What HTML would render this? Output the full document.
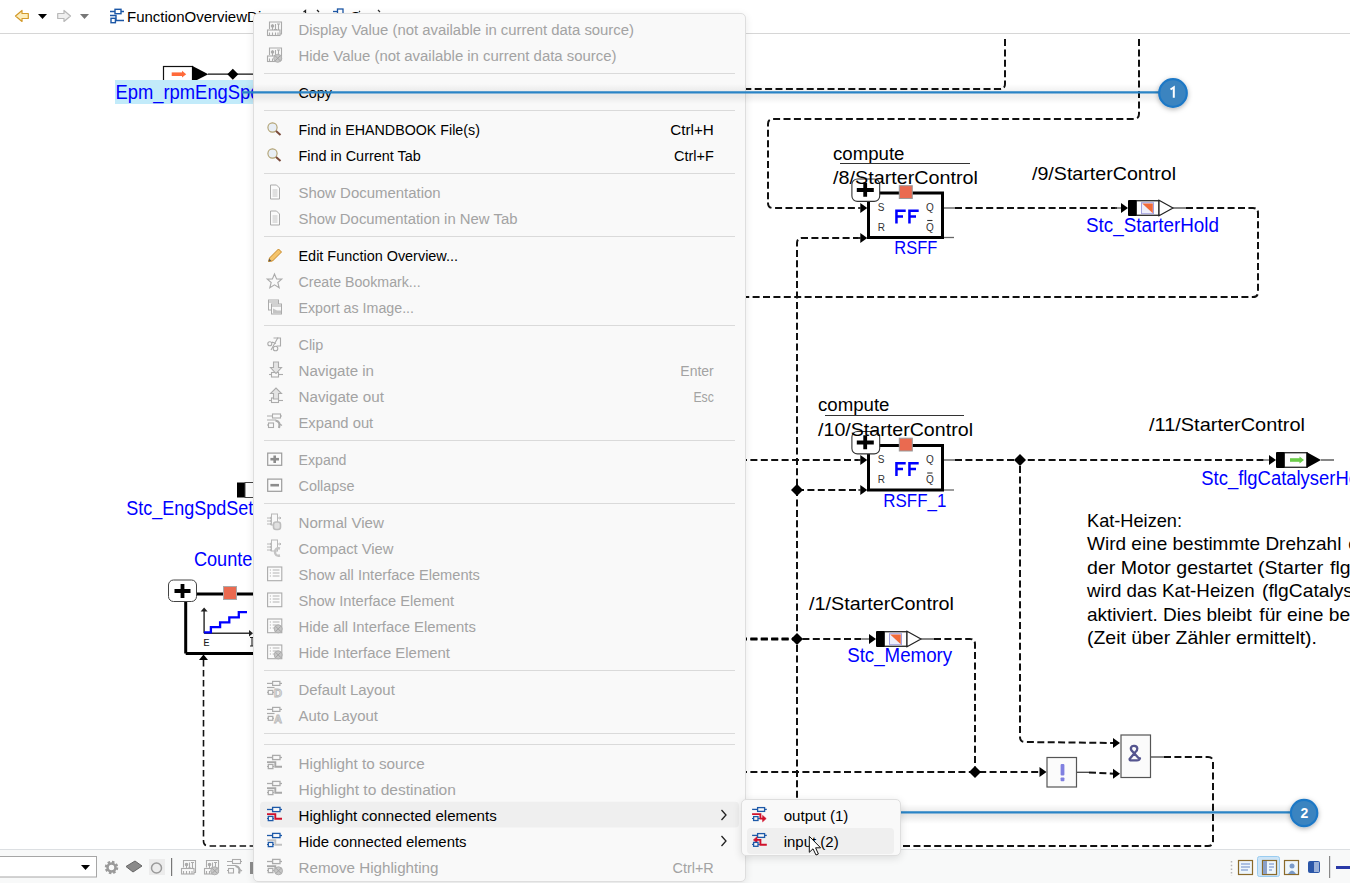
<!DOCTYPE html>
<html><head><meta charset="utf-8"><style>
html,body{margin:0;padding:0;width:1350px;height:883px;overflow:hidden;background:#fff;}
svg{position:absolute;left:0;top:0;font-family:"Liberation Sans", sans-serif;}
.menu{position:absolute;left:253px;top:13px;width:493px;height:869px;background:#f9f9f9;border:1px solid #dedede;box-sizing:border-box;border-radius:5px;box-shadow:0 2px 9px rgba(0,0,0,0.09);}
.sub{position:absolute;left:741px;top:799px;width:160px;height:57px;background:#f9f9f9;border:1px solid #dedede;box-sizing:border-box;border-radius:5px;box-shadow:0 2px 9px rgba(0,0,0,0.12);}
</style></head><body>
<svg width="1350" height="883" viewBox="0 0 1350 883">
<defs>
<linearGradient id="shadowgrad" x1="0" y1="0" x2="0" y2="1"><stop offset="0" stop-color="#000" stop-opacity="0"/><stop offset="0.5" stop-color="#000" stop-opacity="0.10"/><stop offset="1" stop-color="#000" stop-opacity="0"/></linearGradient>
<filter id="badgeShadow" x="-50%" y="-50%" width="200%" height="200%"><feDropShadow dx="0" dy="1.5" stdDeviation="2.5" flood-color="#000" flood-opacity="0.3"/></filter>
</defs>
<rect x="0" y="0" width="1350" height="33" fill="#fff"/>
<rect x="0" y="33" width="1350" height="1" fill="#d6d6d6"/>
<path d="M15.5,16 L22,10.5 L22,13.5 L28.3,13.5 L28.3,18.5 L22,18.5 L22,21.5 Z" fill="#fdeebd" stroke="#d39a2b" stroke-width="1.2" stroke-linejoin="round"/>
<path d="M38,14 L47,14 L42.5,19 Z" fill="#000"/>
<path d="M70.5,16 L64,10.5 L64,13.5 L57.7,13.5 L57.7,18.5 L64,18.5 L64,21.5 Z" fill="#f0f0f0" stroke="#b8b8b8" stroke-width="1.2" stroke-linejoin="round"/>
<path d="M80,14 L89,14 L84.5,19 Z" fill="#777"/>
<g stroke="#1c57a6" stroke-width="1.4" fill="none"><path d="M110,11.5 H124 M110,15.5 H116 V20.5 H124"/><rect x="115" y="9.3" width="6" height="4.4" fill="#fff"/><rect x="111" y="18.3" width="4.4" height="4.4" fill="#fff"/></g>
<text x="127" y="22" font-size="15" fill="#000" font-weight="normal" text-anchor="start">FunctionOverviewDiagram</text>
<path d="M303.5,12 L305.5,10.5 V13 M317,10 L319,12" stroke="#222" stroke-width="1.3" fill="none"/>
<g stroke="#1c57a6" stroke-width="1.3" fill="none"><path d="M333,11.5 H337"/><rect x="337.5" y="9" width="5.5" height="6" fill="#fff"/></g>
<text x="350.5" y="22" font-size="15" fill="#000">S</text><path d="M359,12 L360,11 M378,10 L380,12" stroke="#333" stroke-width="1.2"/>
<rect x="163.5" y="66.5" width="29" height="20" fill="#fff" stroke="#111" stroke-width="1.2"/>
<path d="M171.7,74.2 H182.5" stroke="#ff6a3a" stroke-width="3.6"/><path d="M182,70.8 L186.2,74.2 L182,77.6 Z" fill="#ff6a3a"/>
<path d="M192,65.8 L208.3,74.2 L192,82.6 Z" fill="#000"/>
<path d="M208,74.2 H254" stroke="#111" stroke-width="1.3"/>
<path d="M227.3,74.2 L232.8,68.7 L238.3,74.2 L232.8,79.7 Z" fill="#000"/>
<rect x="115" y="80" width="139" height="24" fill="#c2ebfa"/>
<text x="115.5" y="99" font-size="19.5" fill="#0000ff" font-weight="normal" text-anchor="start" textLength="145" lengthAdjust="spacingAndGlyphs">Epm_rpmEngSpd</text>
<path d="M1005,39 V84 Q1005,89 1000,89 H740" stroke="#111" stroke-width="2" fill="none" stroke-dasharray="7 3.4" stroke-dashoffset="0"/>
<path d="M1139,39 V114 Q1139,119 1134,119 H773 Q768,119 768,124 V203 Q768,208 773,208 H860" stroke="#111" stroke-width="2" fill="none" stroke-dasharray="7 3.4" stroke-dashoffset="0"/>
<path d="M858,208 H863" stroke="#444" stroke-width="1.2"/>
<path d="M860.3,203 L867.3,208 L860.3,213 Z" fill="#000"/>
<path d="M944,237.5 H954" stroke="#666" stroke-width="1.3"/>
<rect x="868.5" y="193.0" width="74" height="44.5" fill="#fff" stroke="#000" stroke-width="3"/>
<rect x="851.9" y="179.0" width="27.8" height="22.4" rx="5.5" fill="#fff" stroke="#333" stroke-width="1.1"/>
<path d="M856.8,190.0 H873.8 M865.2,182.7 V196.8" stroke="#000" stroke-width="3.8"/>
<rect x="899.3" y="185.7" width="13" height="12.8" fill="#ea6a50" stroke="#9a9a9a" stroke-width="1"/>
<text x="877.8" y="210.9" font-size="10" fill="#333">S</text>
<text x="877.8" y="230.8" font-size="10" fill="#333">R</text>
<text x="926" y="210.9" font-size="10" fill="#333">Q</text>
<text x="926" y="230.8" font-size="10" fill="#333">Q</text>
<path d="M927.2,220.5 H932.5" stroke="#333" stroke-width="1.1"/>
<path d="M896.45,223.5 V210.75 H905.7 M896.45,216.55 H903.0" stroke="#0000ff" stroke-width="2.5" fill="none"/>
<path d="M909.45,223.5 V210.75 H918.7 M909.45,216.55 H916.0" stroke="#0000ff" stroke-width="2.5" fill="none"/>
<text x="894.3" y="254.3" font-size="19" fill="#0000ff" font-weight="normal" text-anchor="start" textLength="43" lengthAdjust="spacingAndGlyphs">RSFF</text>
<text x="833" y="159.5" font-size="18" fill="#000" font-weight="normal" text-anchor="start" textLength="71.5" lengthAdjust="spacingAndGlyphs">compute</text>
<path d="M840,163.5 H970" stroke="#333" stroke-width="1"/>
<text x="833" y="184.0" font-size="19" fill="#000" font-weight="normal" text-anchor="start" textLength="145" lengthAdjust="spacingAndGlyphs">/8/StarterControl</text>
<path d="M944,208 H955" stroke="#555" stroke-width="1.3"/>
<path d="M955,208 H1117" stroke="#111" stroke-width="2" fill="none" stroke-dasharray="7 3.4" stroke-dashoffset="0"/>
<path d="M1115,208 H1122" stroke="#555" stroke-width="1.2"/>
<path d="M1121,203 L1128,208 L1121,213 Z" fill="#000"/>
<text x="1032" y="179.5" font-size="19" fill="#000" font-weight="normal" text-anchor="start" textLength="144" lengthAdjust="spacingAndGlyphs">/9/StarterControl</text>
<rect x="1136" y="200.7" width="23" height="14.6" fill="#fdfdfd" stroke="#333" stroke-width="1.4"/>
<rect x="1128" y="200" width="8.6" height="16" rx="1" fill="#000"/>
<rect x="1141.5" y="202.7" width="12" height="11" fill="#eeeefa" stroke="#a0a0e0" stroke-width="1"/>
<path d="M1142.2,203.4 H1152.8 V213.3 Z" fill="#f26b3a"/>
<path d="M1159,200.2 L1173,208 L1159,215.8 Z" fill="#fff" stroke="#222" stroke-width="1.2"/>
<path d="M1173,208 H1186" stroke="#444" stroke-width="1.3"/>
<path d="M1186,208 H1253 Q1258,208 1258,213 V292 Q1258,297 1253,297 H740" stroke="#111" stroke-width="2" fill="none" stroke-dasharray="7 3.4" stroke-dashoffset="0"/>
<text x="1086" y="232" font-size="19.5" fill="#0000ff" font-weight="normal" text-anchor="start" textLength="133" lengthAdjust="spacingAndGlyphs">Stc_StarterHold</text>
<path d="M860,238 H802 Q797,238 797,243 V860" stroke="#111" stroke-width="2" fill="none" stroke-dasharray="7 3.4" stroke-dashoffset="0"/>
<path d="M858,238 H863" stroke="#444" stroke-width="1.2"/>
<path d="M860.3,233 L867.3,238 L860.3,243 Z" fill="#000"/>
<path d="M740,460 H860" stroke="#111" stroke-width="2" fill="none" stroke-dasharray="7 3.4" stroke-dashoffset="0"/>
<path d="M858,460 H863" stroke="#444" stroke-width="1.2"/>
<path d="M860.3,455 L867.3,460 L860.3,465 Z" fill="#000"/>
<path d="M944,490 H954" stroke="#666" stroke-width="1.3"/>
<rect x="868.5" y="445.5" width="74" height="44.5" fill="#fff" stroke="#000" stroke-width="3"/>
<rect x="851.9" y="431.5" width="27.8" height="22.4" rx="5.5" fill="#fff" stroke="#333" stroke-width="1.1"/>
<path d="M856.8,442.5 H873.8 M865.2,435.2 V449.3" stroke="#000" stroke-width="3.8"/>
<rect x="899.3" y="438.2" width="13" height="12.8" fill="#ea6a50" stroke="#9a9a9a" stroke-width="1"/>
<text x="877.8" y="463.4" font-size="10" fill="#333">S</text>
<text x="877.8" y="483.3" font-size="10" fill="#333">R</text>
<text x="926" y="463.4" font-size="10" fill="#333">Q</text>
<text x="926" y="483.3" font-size="10" fill="#333">Q</text>
<path d="M927.2,473 H932.5" stroke="#333" stroke-width="1.1"/>
<path d="M896.45,476 V463.25 H905.7 M896.45,469.05 H903.0" stroke="#0000ff" stroke-width="2.5" fill="none"/>
<path d="M909.45,476 V463.25 H918.7 M909.45,469.05 H916.0" stroke="#0000ff" stroke-width="2.5" fill="none"/>
<text x="883.3" y="506.8" font-size="19" fill="#0000ff" font-weight="normal" text-anchor="start" textLength="63" lengthAdjust="spacingAndGlyphs">RSFF_1</text>
<text x="818" y="411" font-size="18" fill="#000" font-weight="normal" text-anchor="start" textLength="71.5" lengthAdjust="spacingAndGlyphs">compute</text>
<path d="M825,415.5 H964" stroke="#333" stroke-width="1"/>
<text x="818" y="435.5" font-size="19" fill="#000" font-weight="normal" text-anchor="start" textLength="155" lengthAdjust="spacingAndGlyphs">/10/StarterControl</text>
<path d="M797,490 H860" stroke="#111" stroke-width="2" fill="none" stroke-dasharray="7 3.4" stroke-dashoffset="0"/>
<path d="M858,490 H863" stroke="#444" stroke-width="1.2"/>
<path d="M860.3,485 L867.3,490 L860.3,495 Z" fill="#000"/>
<path d="M791,490 L797,484 L803,490 L797,496 Z" fill="#000"/>
<path d="M944,460 H955" stroke="#555" stroke-width="1.3"/>
<path d="M955,460 H1265" stroke="#111" stroke-width="2" fill="none" stroke-dasharray="7 3.4" stroke-dashoffset="0"/>
<path d="M1264,460 H1271" stroke="#555" stroke-width="1.2"/>
<path d="M1269,455 L1276,460 L1269,465 Z" fill="#000"/>
<path d="M1014,460 L1020,454 L1026,460 L1020,466 Z" fill="#000"/>
<text x="1149" y="431" font-size="19" fill="#000" font-weight="normal" text-anchor="start" textLength="156" lengthAdjust="spacingAndGlyphs">/11/StarterControl</text>
<rect x="1284" y="452.7" width="23" height="14.6" fill="#fdfdfd" stroke="#333" stroke-width="1.4"/>
<rect x="1276" y="452" width="8.6" height="16" rx="1" fill="#000"/>
<path d="M1290,460 H1300" stroke="#6acc48" stroke-width="3.6"/><path d="M1299.5,456.6 L1304,460 L1299.5,463.4 Z" fill="#6acc48"/>
<path d="M1306.5,452 L1321,460 L1306.5,468 Z" fill="#000"/>
<path d="M1321,460 H1334" stroke="#444" stroke-width="1.3"/>
<text x="1201.3" y="484.8" font-size="19.5" fill="#0000ff" font-weight="normal" text-anchor="start" textLength="172" lengthAdjust="spacingAndGlyphs">Stc_flgCatalyserHold</text>
<text x="1087" y="526.8" font-size="18.5" fill="#000" font-weight="normal" text-anchor="start" textLength="95" lengthAdjust="spacingAndGlyphs">Kat-Heizen:</text>
<text x="1087" y="549.8" font-size="18.5" fill="#000" font-weight="normal" text-anchor="start" textLength="254.4" lengthAdjust="spacingAndGlyphs">Wird eine bestimmte Drehzahl</text>
<text x="1348.2" y="549.8" font-size="18.5" fill="#000" font-weight="normal" text-anchor="start" textLength="64" lengthAdjust="spacingAndGlyphs">erreicht</text>
<text x="1087" y="573.6" font-size="18.5" fill="#000" font-weight="normal" text-anchor="start" textLength="236.3" lengthAdjust="spacingAndGlyphs">der Motor gestartet (Starter</text>
<text x="1330" y="573.6" font-size="18.5" fill="#000" font-weight="normal" text-anchor="start" textLength="85" lengthAdjust="spacingAndGlyphs">flgStarter)</text>
<text x="1087" y="597.3" font-size="18.5" fill="#000" font-weight="normal" text-anchor="start" textLength="167.7" lengthAdjust="spacingAndGlyphs">wird das Kat-Heizen</text>
<text x="1262.1" y="597.3" font-size="18.5" fill="#000" font-weight="normal" text-anchor="start" textLength="155" lengthAdjust="spacingAndGlyphs">(flgCatalyserHeat)</text>
<text x="1087" y="621.2" font-size="18.5" fill="#000" font-weight="normal" text-anchor="start" textLength="164.9" lengthAdjust="spacingAndGlyphs">aktiviert. Dies bleibt</text>
<text x="1259.3" y="621.2" font-size="18.5" fill="#000" font-weight="normal" text-anchor="start" textLength="158" lengthAdjust="spacingAndGlyphs">für eine bestimmte</text>
<text x="1087" y="644" font-size="18.5" fill="#000" font-weight="normal" text-anchor="start" textLength="230" lengthAdjust="spacingAndGlyphs">(Zeit über Zähler ermittelt).</text>
<path d="M1020,466 V737 Q1020,742 1025,742 L1114,743" stroke="#111" stroke-width="2" fill="none" stroke-dasharray="7 3.4" stroke-dashoffset="0"/>
<path d="M1113,738 L1120,743 L1113,748 Z" fill="#000"/>
<path d="M740,639 H864" stroke="#111" stroke-width="2" fill="none" stroke-dasharray="7 3.4" stroke-dashoffset="0"/>
<path d="M740,639 H797" stroke="#000" stroke-width="3" fill="none" stroke-dasharray="7 3.4"/>
<path d="M862,639 H870" stroke="#444" stroke-width="1.2"/>
<path d="M869,634 L876,639 L869,644 Z" fill="#000"/>
<path d="M791,639 L797,633 L803,639 L797,645 Z" fill="#000"/>
<text x="809" y="610" font-size="19" fill="#000" font-weight="normal" text-anchor="start" textLength="145" lengthAdjust="spacingAndGlyphs">/1/StarterControl</text>
<rect x="884" y="631.7" width="23" height="14.6" fill="#fdfdfd" stroke="#333" stroke-width="1.4"/>
<rect x="876" y="631" width="8.6" height="16" rx="1" fill="#000"/>
<rect x="889.5" y="633.7" width="12" height="11" fill="#eeeefa" stroke="#a0a0e0" stroke-width="1"/>
<path d="M890.2,634.4 H900.8 V644.3 Z" fill="#f26b3a"/>
<path d="M907,631.2 L921,639 L907,646.8 Z" fill="#fff" stroke="#222" stroke-width="1.2"/>
<path d="M921,639 H934" stroke="#444" stroke-width="1.3"/>
<path d="M934,639 H970 Q975,639 975,644 V772" stroke="#111" stroke-width="2" fill="none" stroke-dasharray="7 3.4" stroke-dashoffset="0"/>
<text x="847.2" y="661.8" font-size="19.5" fill="#0000ff" font-weight="normal" text-anchor="start" textLength="105" lengthAdjust="spacingAndGlyphs">Stc_Memory</text>
<path d="M740,772 H1040" stroke="#111" stroke-width="2" fill="none" stroke-dasharray="7 3.4" stroke-dashoffset="0"/>
<path d="M1039.5,767 L1046.5,772 L1039.5,777 Z" fill="#000"/>
<path d="M969,772 L975,766 L981,772 L975,778 Z" fill="#000"/>
<rect x="1047" y="757.5" width="29.5" height="29.5" fill="#fbfbfb" stroke="#555" stroke-width="1.2"/>
<rect x="1060.6" y="764" width="3.8" height="11.6" rx="1" fill="#8080e0"/><rect x="1060.6" y="777.5" width="3.8" height="3.8" rx="0.8" fill="#8080e0"/>
<path d="M1077,772.3 H1089" stroke="#444" stroke-width="1.3"/>
<path d="M1089,772.4 L1114,773.8" stroke="#111" stroke-width="2" fill="none" stroke-dasharray="7 3.4" stroke-dashoffset="0"/>
<path d="M1113,768.8 L1120,773.8 L1113,778.8 Z" fill="#000"/>
<rect x="1121" y="735" width="29.5" height="42.5" fill="#fbfbfb" stroke="#555" stroke-width="1.2"/>
<g fill="none" stroke="#55558f" stroke-width="2.3" stroke-linejoin="round" stroke-linecap="round"><path d="M1133,752 Q1130.3,750 1131,747.6 Q1132,745.6 1134.3,745.9 Q1137,746.2 1137.3,748.3 Q1137.5,750.4 1135.3,752.2 L1129.6,759 Q1129.4,760.4 1131.2,760.4 H1137 Q1139.4,760.4 1140,758.3 M1133,752 L1138.5,758"/></g>
<path d="M1151,757 H1164" stroke="#444" stroke-width="1.3"/>
<path d="M1164,757 H1208 Q1213,757 1213,762 V841 Q1213,846 1208,846 H890" stroke="#111" stroke-width="2" fill="none" stroke-dasharray="7 3.4" stroke-dashoffset="0"/>
<rect x="237" y="482.5" width="8" height="15" fill="#000"/>
<rect x="245" y="482.5" width="12" height="15" fill="#fff" stroke="#444" stroke-width="1"/>
<text x="126.3" y="514.7" font-size="19.5" fill="#0000ff" font-weight="normal" text-anchor="start" textLength="166" lengthAdjust="spacingAndGlyphs">Stc_EngSpdSetpoint</text>
<text x="193.9" y="566.3" font-size="19.5" fill="#0000ff" font-weight="normal" text-anchor="start" textLength="64.5" lengthAdjust="spacingAndGlyphs">Counter</text>
<path d="M185.7,653.4 V594 H260 M185.7,653.4 H260" stroke="#000" stroke-width="3" fill="none"/>
<rect x="168.5" y="580" width="28" height="21.5" rx="5" fill="#fff" stroke="#444" stroke-width="1"/>
<path d="M174.5,591 H190.5 M182.5,584 V598" stroke="#000" stroke-width="3.8"/>
<rect x="223.5" y="586.5" width="13" height="13" fill="#ea6a50" stroke="#aaa" stroke-width="1"/>
<path d="M204.1,633.3 V610 M204.1,633.3 H251" stroke="#333" stroke-width="1.5" fill="none"/><path d="M200.6,611.5 L204.1,607.5 L207.6,611.5 Z" fill="#222"/><path d="M249,630 L253,633.3 L249,636.6 Z" fill="#222"/>
<path d="M204,632.3 H210.9 V627.2 H220.1 V622.4 H229.3 V617.3 H238.8 V612.2 H247" stroke="#0000ff" stroke-width="2.3" fill="none"/>
<text x="203.3" y="646.2" font-size="11.5" fill="#222" font-family="Liberation Mono" textLength="6.5" lengthAdjust="spacingAndGlyphs">E</text><path d="M250,637.5 H254 M252,637.5 V646 M250,646 H254" stroke="#222" stroke-width="1.1"/>
<path d="M203.5,660 V841 Q203.5,846 208.5,846 H260" stroke="#111" stroke-width="1.6" fill="none" stroke-dasharray="6.5 3.5"/>
<path d="M199.0,660.0 L203.5,654.5 L208.0,660.0 Z" fill="#000"/>
<rect x="880" y="804" width="420" height="20" fill="url(#shadowgrad)"/>
<path d="M880,812.4 H1292" stroke="#2a84c6" stroke-width="2.3"/>
<g filter="url(#badgeShadow)"><circle cx="1304.1" cy="813" r="13.2" fill="#3b84c0" stroke="#1d78c6" stroke-width="2.2"/></g>
<text x="1304.3" y="817.5" font-size="14" font-weight="bold" fill="#fff" text-anchor="middle">2</text>
<rect x="0" y="849" width="1350" height="34" fill="#f8f9f9"/>
<rect x="0" y="849" width="1350" height="1" fill="#dcdfe2"/>
<rect x="-2" y="856.5" width="98.5" height="20.5" fill="#fff" stroke="#a6a6a6" stroke-width="1"/>
<path d="M81,865 L90,865 L85.5,870 Z" fill="#000"/>
<circle cx="111.5" cy="867.5" r="5" fill="none" stroke="#9a9a9a" stroke-width="3.5" stroke-dasharray="2.2 1.7"/><circle cx="111.5" cy="867.5" r="4" fill="none" stroke="#9a9a9a" stroke-width="2.5"/>
<path d="M126,866.5 L135,861 L142,866 L133,872 Z" fill="#8a8a8a" stroke="#666" stroke-width="1"/>
<rect x="149" y="859" width="16" height="16" fill="#ececec"/><circle cx="156.5" cy="868" r="5" fill="none" stroke="#9a9a9a" stroke-width="1.5"/>
<rect x="171" y="858" width="1.2" height="18" fill="#777"/>
<rect x="250" y="862" width="4" height="12" fill="#8d8d8d"/>
<path d="M1231.5,861 V876" stroke="#b8b8b8" stroke-width="1.5" stroke-dasharray="1.5 2.2"/>
<rect x="1238.5" y="860.5" width="14" height="14" fill="#eef6fb" stroke="#8a6a2a" stroke-width="1.2"/><path d="M1241,864 H1250 M1241,867 H1250 M1241,870 H1248" stroke="#6a8ac8" stroke-width="1"/>
<rect x="1257.5" y="856.5" width="22" height="20" rx="2" fill="#cce4f7" stroke="#99ccf0" stroke-width="1"/>
<rect x="1262.5" y="860.5" width="14" height="14" fill="#eef6fb" stroke="#8a6a2a" stroke-width="1.2"/><rect x="1263" y="861" width="4" height="13" fill="#8aa0c8"/><path d="M1269,864 H1274 M1269,867 H1274 M1269,870 H1272" stroke="#6a8ac8" stroke-width="1"/>
<rect x="1284.5" y="860.5" width="14" height="14" fill="#eef6fb" stroke="#8a6a2a" stroke-width="1.2"/><circle cx="1292" cy="866" r="2.5" fill="#7a9ac8"/><path d="M1288,874 Q1292,867 1296,874" fill="#7a9ac8"/>
<rect x="1308" y="861" width="12" height="12" rx="2" fill="#2a56a8"/><rect x="1314" y="862" width="5" height="10" fill="#9ab0d8"/>
<rect x="1329" y="856" width="1.2" height="22" fill="#888"/>
<rect x="1336" y="866" width="14" height="3" fill="#2a3aa8"/>
<g transform="translate(181,860.0)" stroke="#ababab" stroke-width="1.1" fill="none"><path d="M2.5,7.5 V0.5 H14.5 V12.5 H13"/><path d="M5.5,3 V8.5 M8.5,2.5 V8.5 M11.5,3 V8.5 M10,2.5 H13 M7,8 H10"/><circle cx="5.5" cy="4.5" r="1.2" fill="#ababab"/><rect x="0.5" y="8.5" width="12.5" height="5.5" fill="#f9f9f9"/><path d="M2.5,11 V14 M5.5,11 V14 M8.5,11 V14 M11,11 V14"/></g><g transform="translate(204,860.0)" stroke="#ababab" stroke-width="1.1" fill="none"><path d="M2.5,7.5 V0.5 H14.5 V12.5 H13"/><path d="M5.5,3 V8.5 M8.5,2.5 V8.5 M11.5,3 V8.5 M10,2.5 H13 M7,8 H10"/><circle cx="5.5" cy="4.5" r="1.2" fill="#ababab"/><rect x="0.5" y="8.5" width="8" height="5.5" fill="#f9f9f9"/><path d="M2.5,11 V14 M5.5,11 V14"/><circle cx="10.7" cy="10.8" r="4" fill="#c6c6c6" stroke="#b0b0b0" stroke-width="1"/><path d="M8.1,8.200000000000001 L13.299999999999999,13.4 M13.299999999999999,8.200000000000001 L8.1,13.4" stroke="#a0a0a0" stroke-width="0.9"/></g><g transform="translate(227,860.0)" stroke="#ababab" stroke-width="1.1" fill="none"><path d="M0,1.5 H15 M0,5.5 H9 M0,10.5 H7"/><rect x="5.5" y="-0.5" width="8" height="4" fill="#f9f9f9"/><rect x="1.5" y="8.5" width="5" height="4.5" fill="#f9f9f9"/><path d="M8.5,6 Q14,7 12,13.5" stroke-width="2.2"/><path d="M12,9 L15,11" /></g>
</svg>
<div class="menu"></div>
<svg width="1350" height="883" viewBox="0 0 1350 883">

<g transform="translate(267,21.5)" stroke="#ababab" stroke-width="1.1" fill="none"><path d="M2.5,7.5 V0.5 H14.5 V12.5 H13"/><path d="M5.5,3 V8.5 M8.5,2.5 V8.5 M11.5,3 V8.5 M10,2.5 H13 M7,8 H10"/><circle cx="5.5" cy="4.5" r="1.2" fill="#ababab"/><rect x="0.5" y="8.5" width="12.5" height="5.5" fill="#f9f9f9"/><path d="M2.5,11 V14 M5.5,11 V14 M8.5,11 V14 M11,11 V14"/></g>
<text x="298.5" y="35" font-size="15.5" fill="#a3a3a3" textLength="335.5" lengthAdjust="spacingAndGlyphs">Display Value (not available in current data source)</text>
<g transform="translate(267,47.5)" stroke="#ababab" stroke-width="1.1" fill="none"><path d="M2.5,7.5 V0.5 H14.5 V12.5 H13"/><path d="M5.5,3 V8.5 M8.5,2.5 V8.5 M11.5,3 V8.5 M10,2.5 H13 M7,8 H10"/><circle cx="5.5" cy="4.5" r="1.2" fill="#ababab"/><rect x="0.5" y="8.5" width="8" height="5.5" fill="#f9f9f9"/><path d="M2.5,11 V14 M5.5,11 V14"/><circle cx="10.7" cy="10.8" r="4" fill="#c6c6c6" stroke="#b0b0b0" stroke-width="1"/><path d="M8.1,8.200000000000001 L13.299999999999999,13.4 M13.299999999999999,8.200000000000001 L8.1,13.4" stroke="#a0a0a0" stroke-width="0.9"/></g>
<text x="298.5" y="61" font-size="15.5" fill="#a3a3a3" textLength="318" lengthAdjust="spacingAndGlyphs">Hide Value (not available in current data source)</text>
<rect x="264" y="73" width="471" height="1" fill="#dadada"/>
<text x="298.5" y="98" font-size="15.5" fill="#000" textLength="33.4" lengthAdjust="spacingAndGlyphs">Copy</text>
<rect x="264" y="110" width="471" height="1" fill="#dadada"/>
<g transform="translate(267,121.5)"><circle cx="5.5" cy="6" r="4.6" fill="#e8eef5" stroke="#b0a070" stroke-width="1.1"/><path d="M9,9.5 L13.5,13.5" stroke="#7a4a3a" stroke-width="2"/></g>
<text x="298.5" y="135" font-size="15.5" fill="#000" textLength="181.4" lengthAdjust="spacingAndGlyphs">Find in EHANDBOOK File(s)</text>
<text x="670.3" y="135" font-size="15.5" fill="#000" textLength="43.5" lengthAdjust="spacingAndGlyphs">Ctrl+H</text>
<g transform="translate(267,147.5)"><circle cx="5.5" cy="6" r="4.6" fill="#e8eef5" stroke="#b0a070" stroke-width="1.1"/><path d="M9,9.5 L13.5,13.5" stroke="#7a4a3a" stroke-width="2"/></g>
<text x="298.5" y="161" font-size="15.5" fill="#000" textLength="122.2" lengthAdjust="spacingAndGlyphs">Find in Current Tab</text>
<text x="674.0999999999999" y="161" font-size="15.5" fill="#000" textLength="39.7" lengthAdjust="spacingAndGlyphs">Ctrl+F</text>
<rect x="264" y="173" width="471" height="1" fill="#dadada"/>
<g transform="translate(267,184.5)" stroke="#ababab" stroke-width="1" fill="#fbfbfb"><path d="M3.5,0.5 H9.5 L12.5,3.5 V14.5 H3.5 Z"/><path d="M5.5,5.5 H10.5 M5.5,7.5 H10.5 M5.5,9.5 H10.5 M5.5,11.5 H10.5" stroke="#c4c4c4"/></g>
<text x="298.5" y="198" font-size="15.5" fill="#a3a3a3" textLength="142.2" lengthAdjust="spacingAndGlyphs">Show Documentation</text>
<g transform="translate(267,210.5)" stroke="#ababab" stroke-width="1" fill="#fbfbfb"><path d="M3.5,0.5 H9.5 L12.5,3.5 V14.5 H3.5 Z"/><path d="M5.5,5.5 H10.5 M5.5,7.5 H10.5 M5.5,9.5 H10.5 M5.5,11.5 H10.5" stroke="#c4c4c4"/></g>
<text x="298.5" y="224" font-size="15.5" fill="#a3a3a3" textLength="219" lengthAdjust="spacingAndGlyphs">Show Documentation in New Tab</text>
<rect x="264" y="236" width="471" height="1" fill="#dadada"/>
<g transform="translate(267,247.5)"><path d="M1.5,14 L2.5,10.5 L11.5,1.5 L14.5,4.5 L5.5,13.5 Z" fill="#f5c46a" stroke="#c88a2a" stroke-width="1"/><path d="M1.5,14 L2.3,11.3 L4.3,13.3 Z" fill="#555"/></g>
<text x="298.5" y="261" font-size="15.5" fill="#000" textLength="159.5" lengthAdjust="spacingAndGlyphs">Edit Function Overview...</text>
<g transform="translate(267,273.5)"><path d="M7.5,0.5 L9.6,5.4 L14.8,5.6 L10.8,9 L12.2,14.3 L7.5,11.4 L2.8,14.3 L4.2,9 L0.2,5.6 L5.4,5.4 Z" fill="none" stroke="#ababab" stroke-width="1.1"/></g>
<text x="298.5" y="287" font-size="15.5" fill="#a3a3a3" textLength="122.2" lengthAdjust="spacingAndGlyphs">Create Bookmark...</text>
<g transform="translate(267,299.5)" stroke="#ababab" stroke-width="1" fill="#f9f9f9"><rect x="1.5" y="0.5" width="10" height="10"/><path d="M1.5,2.5 H11.5"/><rect x="4.5" y="4.5" width="10" height="10"/><path d="M4.5,6.5 H14.5" /><path d="M6,9 L10,11 L14,11 V14 H6Z" fill="#c4c4c4" stroke="none"/></g>
<text x="298.5" y="313" font-size="15.5" fill="#a3a3a3" textLength="115.5" lengthAdjust="spacingAndGlyphs">Export as Image...</text>
<rect x="264" y="325" width="471" height="1" fill="#dadada"/>
<g transform="translate(267,336.5)" stroke="#ababab" stroke-width="1.1" fill="none"><path d="M6.5,1.5 H13.5 V9.5 H9.5"/><path d="M4,13.5 L11,1 M9,7 L5,5.5 M1,6 H6"/><circle cx="2.8" cy="7.3" r="2" fill="#f9f9f9"/><circle cx="8.5" cy="12" r="2.3" fill="#f9f9f9"/></g>
<text x="298.5" y="350" font-size="15.5" fill="#a3a3a3" textLength="24.8" lengthAdjust="spacingAndGlyphs">Clip</text>
<g transform="translate(267,362.5)" stroke="#ababab" stroke-width="1.1"><path d="M2,12 H16" /><rect x="4.5" y="10" width="7" height="4.5" fill="#f9f9f9"/><path d="M6.5,-0.5 H11.5 V5 H14.5 L9,11 L3.5,5 H6.5 Z" fill="#e4e4e4"/></g>
<text x="298.5" y="376" font-size="15.5" fill="#a3a3a3" textLength="75.5" lengthAdjust="spacingAndGlyphs">Navigate in</text>
<text x="680.3" y="376" font-size="15.5" fill="#a3a3a3" textLength="33.5" lengthAdjust="spacingAndGlyphs">Enter</text>
<g transform="translate(267,388.5)" stroke="#ababab" stroke-width="1.1"><path d="M2,12 H16" /><rect x="4.5" y="9.5" width="7" height="4.5" fill="#f9f9f9"/><path d="M6.5,10.5 H11.5 V5 H14.5 L9,-0.5 L3.5,5 H6.5 Z" fill="#e4e4e4"/></g>
<text x="298.5" y="402" font-size="15.5" fill="#a3a3a3" textLength="85.4" lengthAdjust="spacingAndGlyphs">Navigate out</text>
<text x="693.4" y="402" font-size="15.5" fill="#a3a3a3" textLength="20.4" lengthAdjust="spacingAndGlyphs">Esc</text>
<g transform="translate(267,414.5)" stroke="#ababab" stroke-width="1.1" fill="none"><path d="M0,1.5 H15 M0,5.5 H9 M0,10.5 H7"/><rect x="5.5" y="-0.5" width="8" height="4" fill="#f9f9f9"/><rect x="1.5" y="8.5" width="5" height="4.5" fill="#f9f9f9"/><path d="M8.5,6 Q14,7 12,13.5" stroke-width="2.2"/><path d="M12,9 L15,11" /></g>
<text x="298.5" y="428" font-size="15.5" fill="#a3a3a3" textLength="74.7" lengthAdjust="spacingAndGlyphs">Expand out</text>
<rect x="264" y="440" width="471" height="1" fill="#dadada"/>
<g transform="translate(267,451.5)"><rect x="0.7" y="1.6" width="14" height="12.2" fill="#fbfbfb" stroke="#9c9c9c" stroke-width="1.2"/><path d="M3.4,7.7 H12" stroke="#8c8c8c" stroke-width="2.6"/><path d="M7.7,4 V11.5" stroke="#8c8c8c" stroke-width="2.6"/></g>
<text x="298.5" y="465" font-size="15.5" fill="#a3a3a3" textLength="48" lengthAdjust="spacingAndGlyphs">Expand</text>
<g transform="translate(267,477.5)"><rect x="0.7" y="1.6" width="14" height="12.2" fill="#fbfbfb" stroke="#9c9c9c" stroke-width="1.2"/><path d="M3.4,7.7 H12" stroke="#8c8c8c" stroke-width="2.6"/></g>
<text x="298.5" y="491" font-size="15.5" fill="#a3a3a3" textLength="56" lengthAdjust="spacingAndGlyphs">Collapse</text>
<rect x="264" y="503" width="471" height="1" fill="#dadada"/>
<g transform="translate(267,514.5)" stroke="#b8b8b8" stroke-width="1" fill="none"><path d="M0,3.5 H4 M0,6.5 H4 M0,9.5 H4 M3,2.5 L4.5,3.5 L3,4.5 M3,5.5 L4.5,6.5 L3,7.5 M3,8.5 L4.5,9.5 L3,10.5 M10,3.5 H14 M12.5,2.5 L14,3.5 L12.5,4.5"/><rect x="4.5" y="-0.5" width="6" height="11" fill="#f9f9f9"/><rect x="6.5" y="7.5" width="7" height="7.5" rx="2.5" fill="#e0e0e0" stroke="#bdbdbd" stroke-width="1.6"/></g>
<text x="298.5" y="528" font-size="15.5" fill="#a3a3a3" textLength="85.4" lengthAdjust="spacingAndGlyphs">Normal View</text>
<g transform="translate(267,540.5)" stroke="#b8b8b8" stroke-width="1" fill="none"><path d="M0,3.5 H4 M0,6.5 H4 M0,9.5 H4 M3,2.5 L4.5,3.5 L3,4.5 M3,5.5 L4.5,6.5 L3,7.5 M3,8.5 L4.5,9.5 L3,10.5 M10,3.5 H14 M12.5,2.5 L14,3.5 L12.5,4.5"/><rect x="4.5" y="-0.5" width="6" height="11" fill="#f9f9f9"/><path d="M13,8 Q8,7 8,11.5 Q8,16 13,15" stroke="#c4c4c4" stroke-width="2.4"/></g>
<text x="298.5" y="554" font-size="15.5" fill="#a3a3a3" textLength="95" lengthAdjust="spacingAndGlyphs">Compact View</text>
<g transform="translate(267,566.5)" stroke="#ababab" stroke-width="1.1" fill="#fbfbfb"><rect x="0.6" y="0.5" width="14.2" height="13.7"/><path d="M2.8,3.5 H4 M2.8,6.5 H4 M2.8,9.5 H4 M5.7,3.5 H12.5 M5.7,6.5 H12.5 M5.7,9.5 H12.5" stroke="#b4b4b4"/></g>
<text x="298.5" y="580" font-size="15.5" fill="#a3a3a3" textLength="181.4" lengthAdjust="spacingAndGlyphs">Show all Interface Elements</text>
<g transform="translate(267,592.5)" stroke="#ababab" stroke-width="1.1" fill="#fbfbfb"><rect x="0.6" y="0.5" width="14.2" height="13.7"/><path d="M2.8,3.5 H4 M2.8,6.5 H4 M2.8,9.5 H4 M5.7,3.5 H12.5 M5.7,6.5 H12.5 M5.7,9.5 H12.5" stroke="#b4b4b4"/></g>
<text x="298.5" y="606" font-size="15.5" fill="#a3a3a3" textLength="155.5" lengthAdjust="spacingAndGlyphs">Show Interface Element</text>
<g transform="translate(267,618.5)" stroke="#ababab" stroke-width="1.1" fill="#fbfbfb"><rect x="0.6" y="0.5" width="14.2" height="13.7"/><path d="M2.8,3.5 H4 M2.8,6.5 H4 M2.8,9.5 H4 M5.7,3.5 H12.5 M5.7,6.5 H12.5 M5.7,9.5 H12.5" stroke="#b4b4b4"/><circle cx="11.2" cy="10.4" r="4" fill="#c6c6c6" stroke="#b0b0b0" stroke-width="1"/><path d="M8.6,7.800000000000001 L13.799999999999999,13.0 M13.799999999999999,7.800000000000001 L8.6,13.0" stroke="#a0a0a0" stroke-width="0.9"/></g>
<text x="298.5" y="632" font-size="15.5" fill="#a3a3a3" textLength="177.4" lengthAdjust="spacingAndGlyphs">Hide all Interface Elements</text>
<g transform="translate(267,644.5)" stroke="#ababab" stroke-width="1.1" fill="#fbfbfb"><rect x="0.6" y="0.5" width="14.2" height="13.7"/><path d="M2.8,3.5 H4 M2.8,6.5 H4 M2.8,9.5 H4 M5.7,3.5 H12.5 M5.7,6.5 H12.5 M5.7,9.5 H12.5" stroke="#b4b4b4"/><circle cx="11.2" cy="10.4" r="4" fill="#c6c6c6" stroke="#b0b0b0" stroke-width="1"/><path d="M8.6,7.800000000000001 L13.799999999999999,13.0 M13.799999999999999,7.800000000000001 L8.6,13.0" stroke="#a0a0a0" stroke-width="0.9"/></g>
<text x="298.5" y="658" font-size="15.5" fill="#a3a3a3" textLength="151.5" lengthAdjust="spacingAndGlyphs">Hide Interface Element</text>
<rect x="264" y="670" width="471" height="1" fill="#dadada"/>
<g transform="translate(267,681.5)" fill="none" stroke="#ababab" stroke-width="1.2"><path d="M0,1.9 H15"/><rect x="5.6" y="-0.1" width="7.3" height="4"  fill="#f9f9f9"/><path d="M0,6 H7.5"/><path d="M0,10.8 H7"/><rect x="1.3" y="8.9" width="4.5" height="3.9" fill="#f9f9f9"/><text x="7" y="15" font-size="11" font-weight="bold" fill="#e4e4e4" stroke="#b8b8b8" stroke-width="0.8">D</text></g>
<text x="298.5" y="695" font-size="15.5" fill="#a3a3a3" textLength="96.3" lengthAdjust="spacingAndGlyphs">Default Layout</text>
<g transform="translate(267,707.5)" fill="none" stroke="#ababab" stroke-width="1.2"><path d="M0,1.9 H15"/><rect x="5.6" y="-0.1" width="7.3" height="4"  fill="#f9f9f9"/><path d="M0,6 H7.5"/><path d="M0,10.8 H7"/><rect x="1.3" y="8.9" width="4.5" height="3.9" fill="#f9f9f9"/><text x="7" y="15" font-size="11" font-weight="bold" fill="#e4e4e4" stroke="#b8b8b8" stroke-width="0.8">A</text></g>
<text x="298.5" y="721" font-size="15.5" fill="#a3a3a3" textLength="79.5" lengthAdjust="spacingAndGlyphs">Auto Layout</text>
<rect x="264" y="733" width="471" height="1" fill="#dadada"/>
<rect x="264" y="744" width="471" height="1" fill="#dadada"/>
<g transform="translate(267,755.5)" fill="none" stroke-width="1.3"><path d="M0,2 H15" stroke="#ababab"/><rect x="5.6" y="-0.1" width="7.4" height="4.2" fill="#f9f9f9" stroke="#ababab"/><path d="M0,6.6 H8.3 V11.3 H15" stroke="#a8a8a8" stroke-width="1.9"/><path d="M0,11 H7" stroke="#ababab" stroke-width="1"/><rect x="1.3" y="8.9" width="4.6" height="4.2" fill="#f9f9f9" stroke="#ababab"/></g>
<text x="298.5" y="769" font-size="15.5" fill="#a3a3a3" textLength="126.2" lengthAdjust="spacingAndGlyphs">Highlight to source</text>
<g transform="translate(267,781.5)" fill="none" stroke-width="1.3"><path d="M0,2 H15" stroke="#ababab"/><rect x="5.6" y="-0.1" width="7.4" height="4.2" fill="#f9f9f9" stroke="#ababab"/><path d="M0,6.6 H8.3 V11.3 H15" stroke="#a8a8a8" stroke-width="1.9"/><path d="M0,11 H7" stroke="#ababab" stroke-width="1"/><rect x="1.3" y="8.9" width="4.6" height="4.2" fill="#f9f9f9" stroke="#ababab"/></g>
<text x="298.5" y="795" font-size="15.5" fill="#a3a3a3" textLength="157.4" lengthAdjust="spacingAndGlyphs">Highlight to destination</text>
<rect x="260" y="801.8" width="479" height="25.8" rx="4" fill="#efefef"/>
<g transform="translate(267,807.5)" fill="none" stroke-width="1.3"><path d="M0,2 H15" stroke="#1d59a8"/><rect x="5.6" y="-0.1" width="7.4" height="4.2" fill="#f9f9f9" stroke="#1d59a8"/><path d="M0,6.6 H8.3 V11.3 H15" stroke="#d0112b" stroke-width="1.9"/><path d="M0,11 H7" stroke="#1d59a8" stroke-width="1"/><rect x="1.3" y="8.9" width="4.6" height="4.2" fill="#f9f9f9" stroke="#1d59a8"/></g>
<text x="298.5" y="821" font-size="15.5" fill="#000" textLength="198.2" lengthAdjust="spacingAndGlyphs">Highlight connected elements</text>
<path d="M721.5,810 L726,815 L721.5,820" stroke="#222" stroke-width="1.3" fill="none"/>
<g transform="translate(267,833.5)" fill="none" stroke-width="1.3"><path d="M0,2 H15" stroke="#1d59a8"/><rect x="5.6" y="-0.1" width="7.4" height="4.2" fill="#f9f9f9" stroke="#1d59a8"/><path d="M0,6.6 H8.3 V11.3 H15" stroke="#c2c2c2" stroke-width="1.9"/><path d="M0,11 H7" stroke="#1d59a8" stroke-width="1"/><rect x="1.3" y="8.9" width="4.6" height="4.2" fill="#f9f9f9" stroke="#1d59a8"/></g>
<text x="298.5" y="847" font-size="15.5" fill="#000" textLength="168" lengthAdjust="spacingAndGlyphs">Hide connected elements</text>
<path d="M721.5,836 L726,841 L721.5,846" stroke="#222" stroke-width="1.3" fill="none"/>
<g transform="translate(267,859.5)" fill="none" stroke-width="1.3"><path d="M0,2 H15" stroke="#ababab"/><rect x="5.6" y="-0.1" width="7.4" height="4.2" fill="#f9f9f9" stroke="#ababab"/><path d="M0,6.6 H8.3 V11.3 H15" stroke="#a8a8a8" stroke-width="1.9"/><path d="M0,11 H7" stroke="#ababab" stroke-width="1"/><rect x="1.3" y="8.9" width="4.6" height="4.2" fill="#f9f9f9" stroke="#ababab"/><circle cx="11.5" cy="11.3" r="4" fill="#c6c6c6" stroke="#b0b0b0" stroke-width="1"/><path d="M8.9,8.700000000000001 L14.1,13.9 M14.1,8.700000000000001 L8.9,13.9" stroke="#a0a0a0" stroke-width="0.9"/></g>
<text x="298.5" y="873" font-size="15.5" fill="#a3a3a3" textLength="140" lengthAdjust="spacingAndGlyphs">Remove Highlighting</text>
<text x="672.5" y="873" font-size="15.5" fill="#a3a3a3" textLength="41.3" lengthAdjust="spacingAndGlyphs">Ctrl+R</text>
<rect x="242" y="84" width="920" height="20" fill="url(#shadowgrad2)"/>
<defs><linearGradient id="shadowgrad2" x1="0" y1="0" x2="0" y2="1"><stop offset="0" stop-color="#000" stop-opacity="0"/><stop offset="0.45" stop-color="#000" stop-opacity="0.07"/><stop offset="0.65" stop-color="#000" stop-opacity="0.06"/><stop offset="1" stop-color="#000" stop-opacity="0"/></linearGradient>
<filter id="badgeShadow2" x="-50%" y="-50%" width="200%" height="200%"><feDropShadow dx="0" dy="1.5" stdDeviation="2.5" flood-color="#000" flood-opacity="0.3"/></filter></defs>
<path d="M242,92.4 H1160" stroke="#2a84c6" stroke-width="2.3"/>
<g filter="url(#badgeShadow2)"><circle cx="1173" cy="93" r="13.8" fill="#3b84c0" stroke="#1d78c6" stroke-width="2.2"/></g>
<path d="M1170.5,89.5 L1173.8,87.3 V97.8" stroke="#fff" stroke-width="2" fill="none"/>
</svg>
<div class="sub"></div>
<svg width="1350" height="883" viewBox="0 0 1350 883">
<rect x="747" y="828" width="147" height="26" rx="4" fill="#efefef"/>
<g fill="none" stroke-width="1.3"><path d="M752.1,809.4 H766.8" stroke="#1d59a8"/><rect x="757.6" y="807.6" width="7" height="3.8" fill="#f9f9f9" stroke="#1d59a8"/><path d="M752.1,814.1 H760.4 V818.6 H763.5" stroke="#d0112b" stroke-width="1.9"/><path d="M762.6,815.4 L766.2,818.6 L762.6,821.8 Z" fill="#d0112b" stroke="#d0112b" stroke-width="0.6"/><path d="M752,818.5 H760" stroke="#1d59a8" stroke-width="1"/><rect x="753.6" y="816.6" width="4.4" height="3.9" fill="#f9f9f9" stroke="#1d59a8"/></g>
<g fill="none" stroke-width="1.3"><path d="M752.1,835.4 H766.8" stroke="#1d59a8"/><rect x="757.6" y="833.6" width="7" height="3.8" fill="#f9f9f9" stroke="#1d59a8"/><path d="M766.8,844.8 H760.4 V839.9 H756" stroke="#d0112b" stroke-width="1.9"/><path d="M757,836.7 L753.4,839.9 L757,843.1 Z" fill="#d0112b" stroke="#d0112b" stroke-width="0.6"/><path d="M752,844.4 H760" stroke="#1d59a8" stroke-width="1"/><rect x="753.6" y="842.4" width="4.4" height="3.9" fill="#f9f9f9" stroke="#1d59a8"/></g>
<text x="783.7" y="821" font-size="15.5" fill="#000" textLength="64.7" lengthAdjust="spacingAndGlyphs">output (1)</text>
<text x="783.7" y="847" font-size="15.5" fill="#000" textLength="55" lengthAdjust="spacingAndGlyphs">input (2)</text>
<path d="M809.3,836.3 L809.3,852.3 L813,848.8 L816,855 L818.4,854 L815.6,847.8 L820.6,847.8 Z" fill="#fff" stroke="#111" stroke-width="1" stroke-linejoin="round"/>
</svg>
</body></html>
